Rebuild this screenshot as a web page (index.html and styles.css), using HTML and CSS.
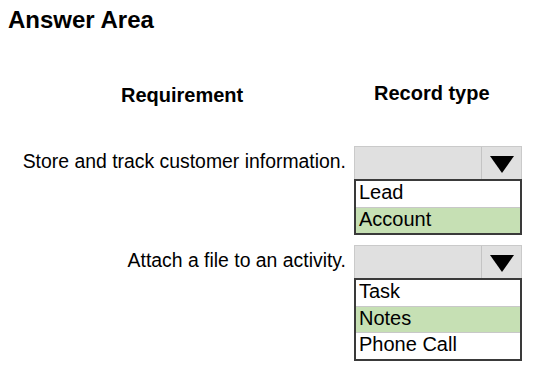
FILE: index.html
```html
<!DOCTYPE html>
<html>
<head>
<title>Answer Area</title>
<link rel="stylesheet" href="styles.css">
</head>
<body>
<h2 class="answer-title">Answer Area</h2>

<div class="answer-grid">
  <div class="col-head req-head">Requirement</div>
  <div class="col-head type-head">Record type</div>

  <div class="req">Store and track customer information.</div>
  <div class="pick">
    <div class="pick-box">
      <span class="pick-value"></span>
      <span class="pick-arrow"><svg width="24" height="17" viewBox="0 0 24 17"><polygon points="0,0 24,0 12,17" fill="#000"/></svg></span>
    </div>
    <ul class="pick-list">
      <li>Lead</li>
      <li class="chosen">Account</li>
    </ul>
  </div>

  <div class="req">Attach a file to an activity.</div>
  <div class="pick">
    <div class="pick-box">
      <span class="pick-value"></span>
      <span class="pick-arrow"><svg width="24" height="17" viewBox="0 0 24 17"><polygon points="0,0 24,0 12,17" fill="#000"/></svg></span>
    </div>
    <ul class="pick-list">
      <li>Task</li>
      <li class="chosen">Notes</li>
      <li>Phone Call</li>
    </ul>
  </div>
</div>
</body>
</html>
```

FILE: styles.css
```css
body {
  margin: 0;
  background: #fff;
  color: #000;
  font-family: "Liberation Sans", Arial, sans-serif;
}
h2.answer-title {
  font-size: 24px;
  line-height: 28px;
  font-weight: bold;
  margin: 0;
  padding: 6px 0 0 8px;
}
.answer-grid {
  display: grid;
  grid-template-columns: 346px 168px;
  column-gap: 8px;
  row-gap: 10px;
  margin-top: 49px;
}
.col-head {
  font-size: 20px;
  line-height: 24px;
  font-weight: bold;
  margin-bottom: 29px;
}
.req-head {
  padding-left: 121px;
}
.type-head {
  padding-left: 20px;
  margin-top: -2px;
}
.req {
  font-size: 19.4px;
  line-height: 22px;
  text-align: right;
  padding-top: 4px;
}
.pick-box {
  display: flex;
  height: 33px;
  box-sizing: border-box;
  background: #e0e0e0;
  border: 1px solid #cacaca;
  border-bottom: none;
}
.pick-value {
  flex: 1;
}
.pick-arrow {
  width: 39px;
  padding-top: 3px;
  border-left: 1px solid #c4c4c4;
  display: flex;
  align-items: center;
  justify-content: center;
}
ul.pick-list {
  list-style: none;
  margin: 0;
  padding: 0;
  border: 2px solid #3a3a3a;
}
.pick-list li {
  font-size: 20px;
  line-height: 22px;
  padding: 0 0 3.5px 3px;
  border-top: 1px solid #c8c8c8;
}
.pick-list li:first-child {
  border-top: none;
}
.pick-list li.chosen {
  background: #c6e0b4;
}
```
